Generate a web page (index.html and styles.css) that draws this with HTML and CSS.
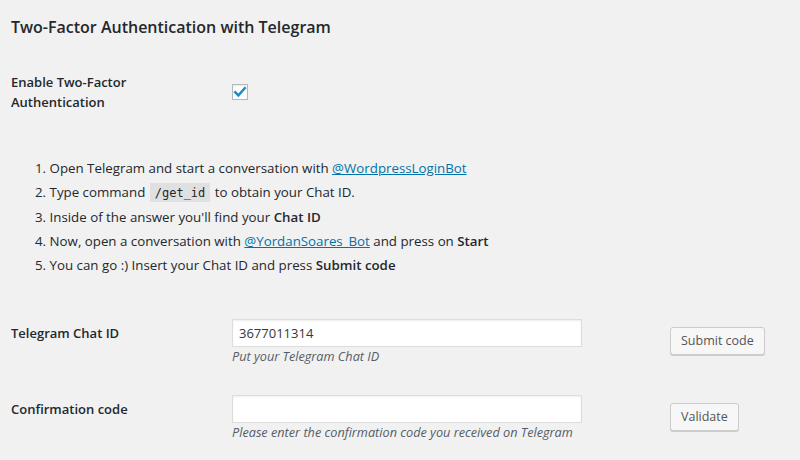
FILE: index.html
```html
<!DOCTYPE html>
<html lang="en">
<head>
<meta charset="utf-8">
<title>Two-Factor Authentication with Telegram</title>
<link rel="stylesheet" href="styles.css">
</head>
<body>
<div class="wrap">
  <h2 class="title">Two-Factor Authentication with Telegram</h2>

  <div class="row row-enable">
    <div class="label">Enable Two-Factor<br>Authentication</div>
    <div class="field">
      <span class="checkbox">
        <svg width="14" height="14" viewBox="0 0 14 14"><path d="M2.2 7.2 L5.4 10.4 L11.8 3.2" fill="none" stroke="#1e8cbe" stroke-width="2.4" stroke-linecap="square" stroke-linejoin="miter"/></svg>
      </span>
    </div>
  </div>

  <ol class="steps">
    <li>Open Telegram and start a conversation with <a href="#">@WordpressLoginBot</a></li>
    <li>Type command <code>/get_id</code> to obtain your Chat ID.</li>
    <li>Inside of the answer you'll find your <strong>Chat ID</strong></li>
    <li>Now, open a conversation with <a href="#">@YordanSoares_Bot</a> and press on <strong>Start</strong></li>
    <li>You can go :) Insert your Chat ID and press <strong>Submit code</strong></li>
  </ol>

  <div class="row row-chat">
    <div class="label">Telegram Chat ID</div>
    <div class="field">
      <div class="input">3677011314</div>
      <p class="desc">Put your Telegram Chat ID</p>
    </div>
    <div class="action"><span class="button">Submit code</span></div>
  </div>

  <div class="row row-confirm">
    <div class="label">Confirmation code</div>
    <div class="field">
      <div class="input"></div>
      <p class="desc">Please enter the confirmation code you received on Telegram</p>
    </div>
    <div class="action"><span class="button">Validate</span></div>
  </div>
</div>
</body>
</html>
```

FILE: styles.css
```css
html, body {
  margin: 0;
  padding: 0;
  background: #f1f1f1;
}
body {
  font-family: "Open Sans", "Noto Sans", sans-serif;
  font-size: 13px;
  color: #23282d;
  width: 800px;
  height: 460px;
  overflow: hidden;
}
.wrap {
  padding: 15px 0 0 11px;
}
.title {
  margin: 0;
  font-size: 16px;
  font-weight: 600;
  line-height: 24px;
  color: #23282d;
}
.row {
  display: flex;
  align-items: flex-start;
}
.label {
  width: 221px;
  flex: none;
  font-weight: 600;
  font-size: 13px;
}
.row-enable {
  margin-top: 33px;
  align-items: center;
}
.row-enable .label {
  line-height: 20px;
}
.checkbox {
  display: flex;
  align-items: center;
  justify-content: center;
  width: 14px;
  height: 14px;
  border: 1px solid #b4b9be;
  background: #fff;
  box-shadow: inset 0 1px 2px rgba(0,0,0,.1);
}
.steps {
  margin: 44px 0 0 0;
  padding: 0 0 0 24px;
  list-style: decimal inside;
  font-size: 13.3px;
  line-height: 24px;
}
.steps li {
  margin: 0;
}
.steps a {
  color: #0073aa;
  text-decoration: underline;
}
.steps strong {
  font-weight: 600;
}
.steps code {
  font-family: "DejaVu Sans Mono", "Liberation Mono", monospace;
  font-size: 12px;
  background: rgba(0,0,0,.07);
  padding: 3px 5px 2px;
  margin: 0 1px;
}
.row-chat {
  margin-top: 42px;
}
.row-confirm {
  margin-top: 30px;
}
.row-chat .label, .row-confirm .label {
  line-height: 28px;
}
.field {
  width: 438px;
  flex: none;
}
.input {
  box-sizing: border-box;
  width: 350px;
  height: 28px;
  background: #fff;
  border: 1px solid #ddd;
  box-shadow: inset 0 1px 2px rgba(0,0,0,.07);
  padding: 0 6px;
  line-height: 26px;
  font-size: 13px;
  color: #32373c;
}
.desc {
  margin: 0;
  font-style: italic;
  font-size: 12.7px;
  line-height: 18px;
  color: #555d66;
}
.action {
  padding-top: 8px;
}
.button {
  display: inline-block;
  box-sizing: border-box;
  height: 28px;
  line-height: 26px;
  padding: 0 10px;
  font-size: 12.5px;
  color: #555;
  background: #f7f7f7;
  border: 1px solid #ccc;
  border-radius: 3px;
  box-shadow: 0 1px 0 #ccc;
  white-space: nowrap;
}
```
